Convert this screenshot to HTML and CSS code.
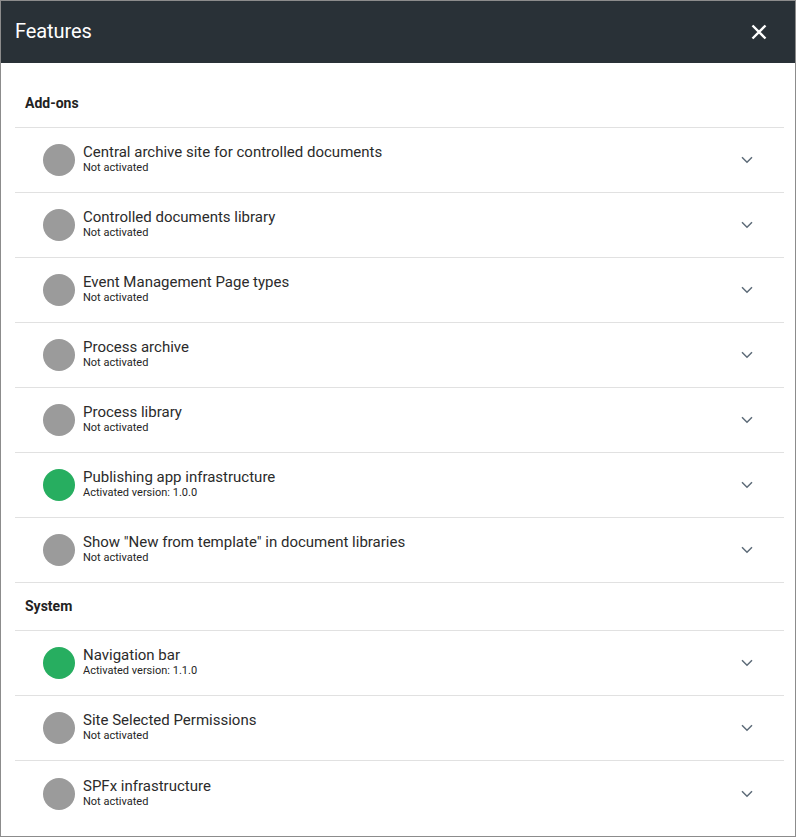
FILE: index.html
```html
<!DOCTYPE html>
<html>
<head>
<meta charset="utf-8">
<link rel="stylesheet" href="styles.css">
</head>
<body>
<div class="panel">
  <header class="header">
    <h1 class="title">Features</h1>
    <button class="close" aria-label="Close">
      <svg width="16" height="16" viewBox="0 0 16 16"><path d="M1.5 1.5 L14.5 14.5 M14.5 1.5 L1.5 14.5" stroke="#fff" stroke-width="2.4" fill="none"/></svg>
    </button>
  </header>
  <main class="body">
    <div class="section">Add-ons</div>
    <div class="row"><span class="dot"></span><div class="text"><div class="name">Central archive site for controlled documents</div><div class="status">Not activated</div></div><svg class="chev" width="12" height="8" viewBox="0 0 12 8"><path d="M1 1.2 L6 6.2 L11 1.2" stroke="#5d6b78" stroke-width="1.5" fill="none"/></svg></div>
    <div class="row"><span class="dot"></span><div class="text"><div class="name">Controlled documents library</div><div class="status">Not activated</div></div><svg class="chev" width="12" height="8" viewBox="0 0 12 8"><path d="M1 1.2 L6 6.2 L11 1.2" stroke="#5d6b78" stroke-width="1.5" fill="none"/></svg></div>
    <div class="row"><span class="dot"></span><div class="text"><div class="name">Event Management Page types</div><div class="status">Not activated</div></div><svg class="chev" width="12" height="8" viewBox="0 0 12 8"><path d="M1 1.2 L6 6.2 L11 1.2" stroke="#5d6b78" stroke-width="1.5" fill="none"/></svg></div>
    <div class="row"><span class="dot"></span><div class="text"><div class="name">Process archive</div><div class="status">Not activated</div></div><svg class="chev" width="12" height="8" viewBox="0 0 12 8"><path d="M1 1.2 L6 6.2 L11 1.2" stroke="#5d6b78" stroke-width="1.5" fill="none"/></svg></div>
    <div class="row"><span class="dot"></span><div class="text"><div class="name">Process library</div><div class="status">Not activated</div></div><svg class="chev" width="12" height="8" viewBox="0 0 12 8"><path d="M1 1.2 L6 6.2 L11 1.2" stroke="#5d6b78" stroke-width="1.5" fill="none"/></svg></div>
    <div class="row"><span class="dot on"></span><div class="text"><div class="name">Publishing app infrastructure</div><div class="status">Activated version: 1.0.0</div></div><svg class="chev" width="12" height="8" viewBox="0 0 12 8"><path d="M1 1.2 L6 6.2 L11 1.2" stroke="#5d6b78" stroke-width="1.5" fill="none"/></svg></div>
    <div class="row"><span class="dot"></span><div class="text"><div class="name">Show "New from template" in document libraries</div><div class="status">Not activated</div></div><svg class="chev" width="12" height="8" viewBox="0 0 12 8"><path d="M1 1.2 L6 6.2 L11 1.2" stroke="#5d6b78" stroke-width="1.5" fill="none"/></svg></div>
    <div class="section sys">System</div>
    <div class="row"><span class="dot on"></span><div class="text"><div class="name">Navigation bar</div><div class="status">Activated version: 1.1.0</div></div><svg class="chev" width="12" height="8" viewBox="0 0 12 8"><path d="M1 1.2 L6 6.2 L11 1.2" stroke="#5d6b78" stroke-width="1.5" fill="none"/></svg></div>
    <div class="row"><span class="dot"></span><div class="text"><div class="name">Site Selected Permissions</div><div class="status">Not activated</div></div><svg class="chev" width="12" height="8" viewBox="0 0 12 8"><path d="M1 1.2 L6 6.2 L11 1.2" stroke="#5d6b78" stroke-width="1.5" fill="none"/></svg></div>
    <div class="row"><span class="dot"></span><div class="text"><div class="name">SPFx infrastructure</div><div class="status">Not activated</div></div><svg class="chev" width="12" height="8" viewBox="0 0 12 8"><path d="M1 1.2 L6 6.2 L11 1.2" stroke="#5d6b78" stroke-width="1.5" fill="none"/></svg></div>
  </main>
</div>
</body>
</html>
```
FILE: styles.css
```css
* { box-sizing: border-box; }
html, body { margin: 0; padding: 0; background: #fff; }
body { font-family: Roboto, "Liberation Sans", sans-serif; color: #252525; }
.panel {
  width: 796px;
  height: 837px;
  border: 1px solid #8c8c8c;
  display: flex;
  flex-direction: column;
  overflow: hidden;
}
.header {
  height: 62px;
  background: #293137;
  display: flex;
  align-items: center;
  justify-content: space-between;
  padding: 0 28px 0 14px;
  flex-shrink: 0;
}
.title {
  margin: 0;
  color: #fff;
  font-size: 20px;
  font-weight: 400;
  letter-spacing: -0.1px;
  position: relative;
  top: -1px;
}
.close {
  background: none;
  border: 0;
  padding: 0;
  width: 16px;
  height: 16px;
  display: flex;
  cursor: pointer;
}
.body {
  padding: 17px 11px 0 14px;
  display: flex;
  flex-direction: column;
}
.section {
  height: 48px;
  display: flex;
  align-items: center;
  padding-left: 10px;
  padding-bottom: 2px;
  font-size: 14px;
  font-weight: 700;
  color: #222;
  border-bottom: 1px solid #e1e1e1;
}
.row {
  height: 65px;
  display: flex;
  align-items: center;
  padding: 0 31px 0 28px;
  border-bottom: 1px solid #e1e1e1;
}
.row:last-child { border-bottom: 0; }
.dot {
  width: 32px;
  height: 32px;
  border-radius: 50%;
  background: #9b9b9b;
  flex-shrink: 0;
  margin-right: 8px;
}
.dot.on { background: #27ae60; }
.text { flex: 1; display: flex; flex-direction: column; margin-bottom: 2px; }
.name { font-size: 15px; line-height: 17px; color: #2b2b2b; }
.status { font-size: 11px; line-height: 13px; color: #252525; }
.chev { flex-shrink: 0; }
```
